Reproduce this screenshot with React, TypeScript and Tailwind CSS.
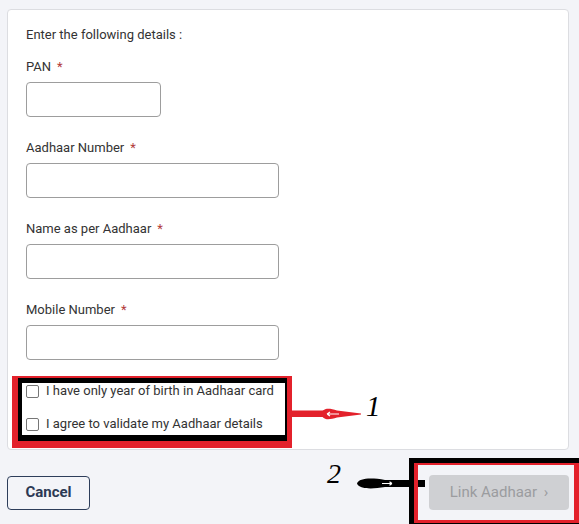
import React from "react";

function Field({ label, width }: { label: string; width: string }) {
	return (
		<div className="flex flex-col">
			<div className="h-[16px] text-[13px] leading-[16px] text-[#333]">
				{label}
				<span className="ml-[6px] text-[#b23b3b]">*</span>
			</div>
			<input
				className={`mt-[7px] h-[35px] ${width} rounded-[4px] border border-[#9d9d9d] bg-white px-2 outline-none`}
			/>
		</div>
	);
}

function Check({ label }: { label: string }) {
	return (
		<label className="flex h-[16px] items-center">
			<span className="h-[13px] w-[13px] rounded-[2px] border border-[#767676] bg-white" />
			<span className="ml-[7px] text-[13px] leading-[16px] text-[#333]">{label}</span>
		</label>
	);
}

export default function App() {
	return (
		<div className="relative h-[524px] w-[579px] overflow-hidden bg-[#f3f4f8] font-['Roboto','Liberation_Sans',sans-serif]">
			{/* form card */}
			<div className="ml-[7px] mt-[9px] h-[441px] w-[562px] rounded-[4px] border border-[#dcdde1] bg-white">
				<div className="px-[18px] pt-[17px]">
					<div className="h-[16px] text-[13px] leading-[16px] text-[#333]">
						Enter the following details :
					</div>
					<div className="mt-[16px] flex flex-col gap-[23px]">
						<Field label="PAN" width="w-[135px]" />
						<Field label="Aadhaar Number" width="w-[253px]" />
						<Field label="Name as per Aadhaar" width="w-[253px]" />
						<Field label="Mobile Number" width="w-[253px]" />
					</div>
				</div>

				{/* annotation box 1 */}
				<div className="ml-[4px] mt-[16px] w-[280px] border-b-[7px] border-l-[6px] border-r-[5px] border-t-[2px] border-[#e3212b]">
					<div className="h-[63px] border-b-[6px] border-l-[4px] border-r-[2px] border-t-[5px] border-black bg-white pl-[4px] pt-[0px]">
						<div className="flex flex-col gap-[17px]">
							<Check label="I have only year of birth in Aadhaar card" />
							<Check label="I agree to validate my Aadhaar details" />
						</div>
					</div>
				</div>
			</div>

			{/* footer buttons */}
			<div className="mt-[25px] flex items-center justify-between pl-[7px] pr-[10px]">
				<button className="h-[34px] w-[83px] rounded-[4px] border-[1.5px] border-[#2d3d5a] bg-transparent text-[15px] font-bold text-[#2b3954]">
					Cancel
				</button>
				<button className="h-[35px] w-[140px] rounded-[4px] bg-[#cfd0d3] text-[15px] text-[#9b9c9f]">
					Link Aadhaar <span className="ml-[3px]">›</span>
				</button>
			</div>

			{/* annotation 1 arrow */}
			<svg className="absolute left-[289px] top-[404px]" width="80" height="20" viewBox="0 0 80 20">
				<rect x="0" y="6.5" width="36" height="6.5" fill="#e3212b" />
				<path d="M32 10 C34 3.5 40 4 48 6.5 L72 9.5 L72 10.5 L48 13.5 C40 16 34 16.5 32 10 Z" fill="#e3212b" />
				<path d="M38 10 H50 M38 10 L41 8 M38 10 L41 12" stroke="#fff" strokeWidth="1.2" fill="none" />
			</svg>
			<div className="absolute left-[366px] top-[388px] font-['Liberation_Serif',serif] text-[29px] italic leading-[36px] text-black">
				1
			</div>

			{/* annotation 2 */}
			<div className="absolute left-[327px] top-[456px] font-['Liberation_Serif',serif] text-[28px] italic leading-[36px] text-black">
				2
			</div>
			<svg className="absolute left-[355px] top-[474px]" width="72" height="20" viewBox="0 0 72 20">
				<path d="M2 9.5 C4 4 16 3.5 30 6 L70 6 L70 13 L30 13 C16 15.5 4 15 2 9.5 Z" fill="#000" />
				<path d="M27 9.5 H37 M37 9.5 L34.5 7.8 M37 9.5 L34.5 11.2" stroke="#fff" strokeWidth="1.2" fill="none" />
			</svg>
			<div className="absolute left-[409px] top-[458px] h-[70px] w-[175px] border-[5px] border-black">
				<div className="h-full w-full border-b-[3px] border-l-[4px] border-r-[5px] border-t-[2px] border-[#e3212b]" />
			</div>
		</div>
	);
}
